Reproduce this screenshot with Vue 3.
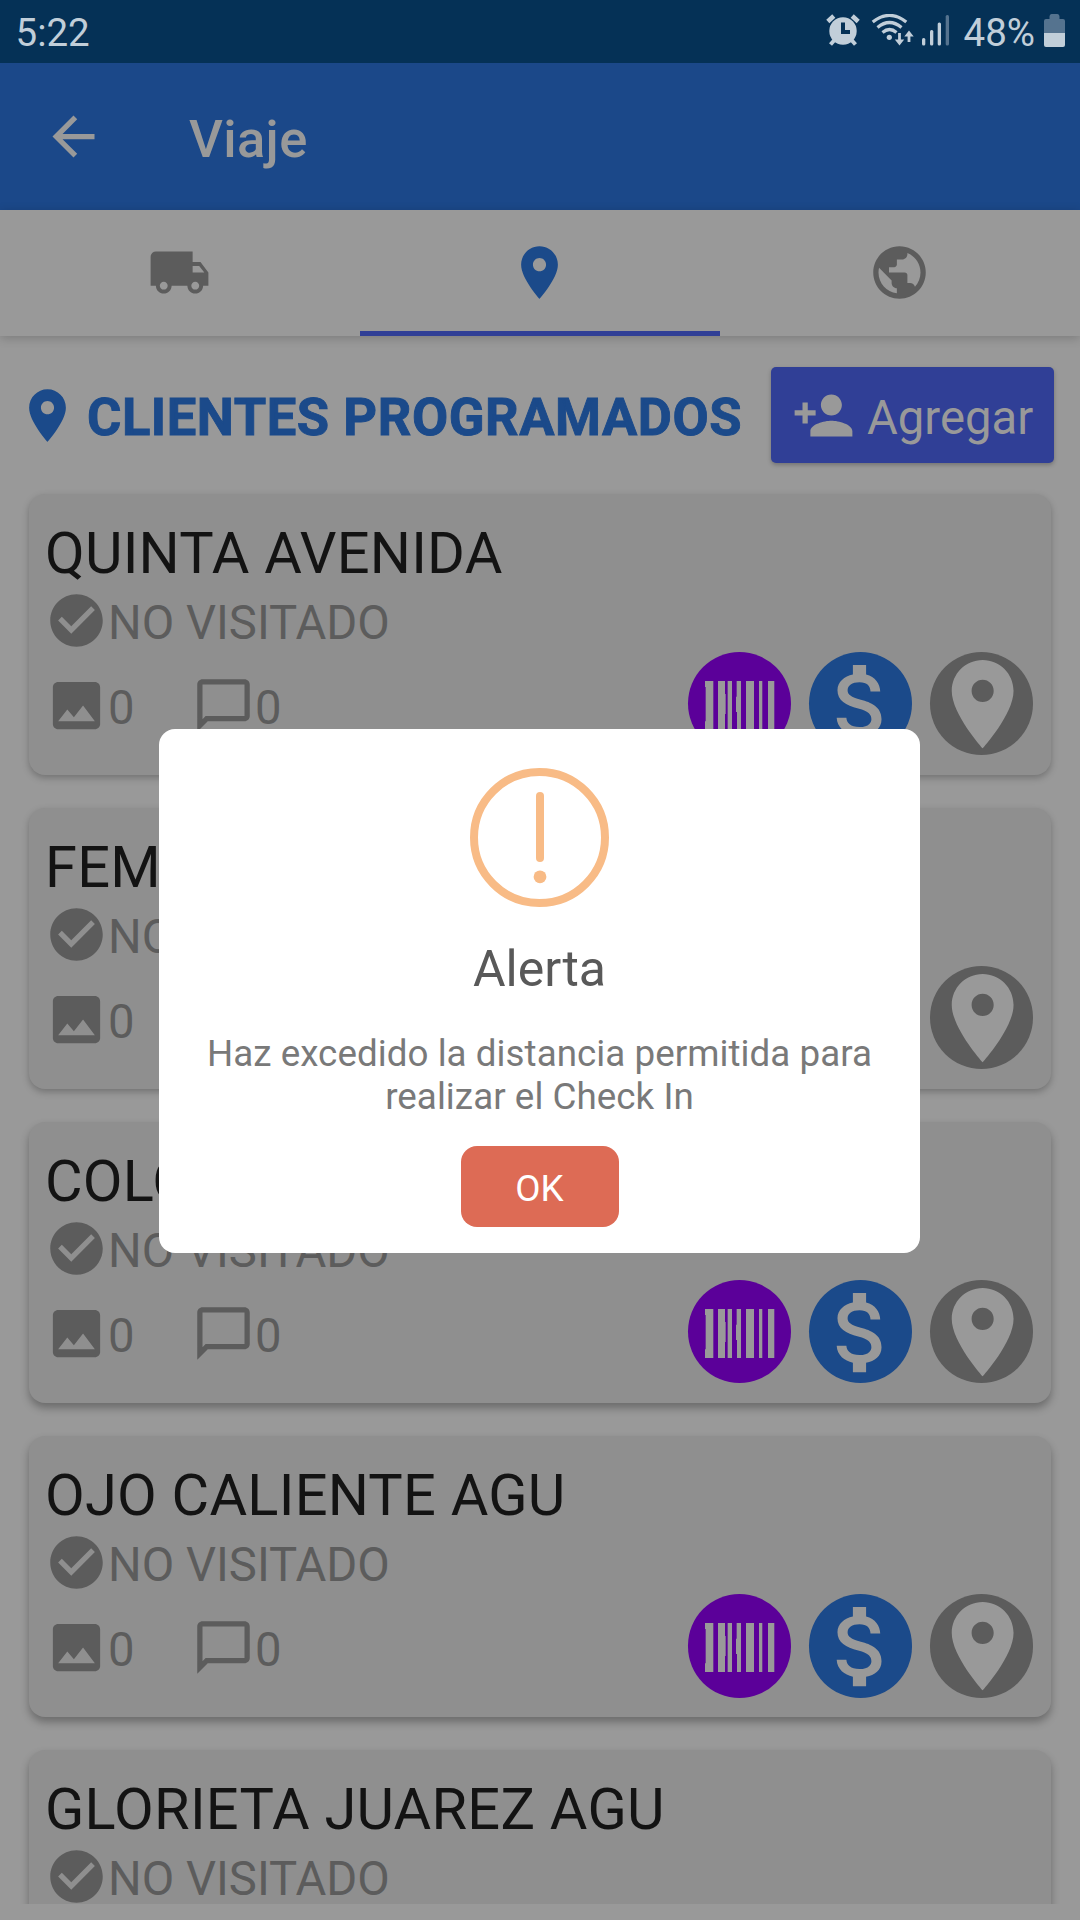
<script setup>
const icons = {
  back: 'M20 11H7.83l5.59-5.59L12 4l-8 8 8 8 1.41-1.41L7.83 13H20v-2z',
  truck: 'M20 8h-3V4H3c-1.1 0-2 .9-2 2v11h2c0 1.66 1.34 3 3 3s3-1.34 3-3h6c0 1.66 1.34 3 3 3s3-1.34 3-3h2v-5l-3-4zM6 18.5c-.83 0-1.5-.67-1.5-1.5s.67-1.5 1.5-1.5 1.5.67 1.5 1.5-.67 1.5-1.5 1.5zm13.5-9l1.96 2.5H17V9.5h2.5zm-1.5 9c-.83 0-1.5-.67-1.5-1.5s.67-1.5 1.5-1.5 1.5.67 1.5 1.5-.67 1.5-1.5 1.5z',
  pin: 'M12 2C8.13 2 5 5.13 5 9c0 5.25 7 13 7 13s7-7.75 7-13c0-3.87-3.13-7-7-7zm0 9.5c-1.38 0-2.5-1.12-2.5-2.5s1.12-2.5 2.5-2.5 2.5 1.12 2.5 2.5-1.12 2.5-2.5 2.5z',
  globe: 'M12 2C6.48 2 2 6.48 2 12s4.48 10 10 10 10-4.48 10-10S17.52 2 12 2zm-1 17.93c-3.95-.49-7-3.85-7-7.93 0-.62.08-1.21.21-1.79L9 15v1c0 1.1.9 2 2 2v1.93zm6.9-2.54c-.26-.81-1-1.39-1.9-1.39h-1v-3c0-.55-.45-1-1-1H8v-2h2c.55 0 1-.45 1-1V7h2c1.1 0 2-.9 2-2v-.41c2.93 1.19 5 4.06 5 7.41 0 2.08-.8 3.97-2.1 5.39z',
  personAdd: 'M15 12c2.21 0 4-1.79 4-4s-1.79-4-4-4-4 1.79-4 4 1.79 4 4 4zm-9-2V7H4v3H1v2h3v3h2v-3h3v-2H6zm9 4c-2.67 0-8 1.34-8 4v2h16v-2c0-2.66-5.33-4-8-4z',
  check: 'M12 2C6.48 2 2 6.48 2 12s4.48 10 10 10 10-4.48 10-10S17.52 2 12 2zm-2 15l-5-5 1.41-1.41L10 14.17l7.59-7.59L19 8l-9 9z',
  image: 'M21 19V5c0-1.1-.9-2-2-2H5c-1.1 0-2 .9-2 2v14c0 1.1.9 2 2 2h14c1.1 0 2-.9 2-2zM5 18l3.5-4.5 2.5 3.01L14.500 12l4.500 6H5z',
  chat: 'M20 2H4c-1.1 0-2 .9-2 2v18l4-4h14c1.1 0 2-.9 2-2V4c0-1.1-.9-2-2-2zm0 14H5.200L4 17.200V4h16v12z',
  money: 'M11.8 10.9c-2.27-.59-3-1.2-3-2.15 0-1.09 1.01-1.85 2.7-1.85 1.78 0 2.44.85 2.5 2.1h2.21c-.07-1.72-1.12-3.3-3.21-3.81V3h-3v2.16c-1.94.42-3.5 1.68-3.5 3.61 0 2.31 1.91 3.46 4.7 4.13 2.5.6 3 1.48 3 2.41 0 .69-.49 1.79-2.7 1.79-2.06 0-2.87-.92-2.98-2.1h-2.2c.12 2.19 1.76 3.42 3.68 3.83V21h3v-2.15c1.95-.37 3.5-1.5 3.5-3.55 0-2.84-2.43-3.81-4.7-4.4z'
}
const clients = ['QUINTA AVENIDA', 'FEMSA AGU', 'COLOSIO AGU', 'OJO CALIENTE AGU', 'GLORIETA JUAREZ AGU']
</script>

<template>
  <div class="screen">
    <header class="status">
      <span class="clock">5:22</span>
      <div class="status-right">
        <svg class="indicators" width="124" height="33" viewBox="826 14 124 33">
          <g fill="#c1ced9">
            <circle cx="843" cy="31" r="13.7" />
            <g stroke="#c1ced9" stroke-width="4.6">
              <path d="M827.8 21.5L833.8 16M858.2 21.5L852.2 16" />
              <path d="M834.5 40L830.5 44.5M851.5 40L855.5 44.5" stroke-width="4" />
            </g>
          </g>
          <path d="M843 22.5V32H850" fill="none" stroke="#053156" stroke-width="4" />
          <g fill="none" stroke="#c1ced9" stroke-width="3.2">
            <path d="M872.7 22Q889.5 8.8 906.3 22" />
            <path d="M877.5 27.5Q889.5 17.5 901.5 27.5" />
            <path d="M882.5 32.5Q889.5 26.5 896.5 32.5" />
            <path d="M899.5 33V42M909 42V34" stroke-width="2.8" />
          </g>
          <g fill="#c1ced9">
            <circle cx="889.3" cy="37.3" r="2.6" />
            <path d="M894.8 39.5H904.2L899.5 45.5ZM904.3 36.5H913.7L909 30.5Z" />
            <rect x="922" y="38" width="3.3" height="7.5" rx="1.5" />
            <rect x="930" y="30" width="3.3" height="15.5" rx="1.5" />
            <rect x="937.7" y="22.5" width="3.3" height="23" rx="1.5" />
          </g>
          <rect x="945.7" y="15" width="3.3" height="30.5" rx="1.5" fill="#55738f" />
        </svg>
        <span class="pct">48%</span>
        <svg class="battery" width="21" height="33" viewBox="0 0 21 33">
          <path d="M5.500 2.500Q5.500 0 7.500 0H13.500Q15.500 0 15.500 2.500V5H19Q21 5 21 7V19H0V7Q0 5 2 5H5.500Z" fill="#55738f" />
          <path d="M0 19H21V31Q21 33 19 33H2Q0 33 0 31Z" fill="#c1ced9" />
        </svg>
      </div>
    </header>

    <div class="appbar">
      <svg class="icon" viewBox="0 0 24 24"><path :d="icons.back" /></svg>
      <h1>Viaje</h1>
    </div>

    <nav class="tabs">
      <div class="tab"><svg class="icon" viewBox="0 0 24 24"><path :d="icons.truck" /></svg></div>
      <div class="tab active"><svg class="icon" viewBox="0 0 24 24"><path :d="icons.pin" /></svg></div>
      <div class="tab"><svg class="icon" viewBox="0 0 24 24"><path :d="icons.globe" /></svg></div>
    </nav>

    <main class="content">
      <div class="heading">
        <svg class="icon" viewBox="0 0 24 24"><path :d="icons.pin" /></svg>
        <h2>CLIENTES PROGRAMADOS</h2>
        <button class="add">
          <svg class="icon" viewBox="0 0 24 24"><path :d="icons.personAdd" /></svg>
          <span>Agregar</span>
        </button>
      </div>

      <section class="list">
        <article v-for="name in clients" :key="name" class="card">
          <h3>{{ name }}</h3>
          <div class="state">
            <svg class="icon" viewBox="0 0 24 24"><path :d="icons.check" /></svg>
            <span>NO VISITADO</span>
          </div>
          <div class="bottom">
            <div class="count photos">
              <svg class="icon" viewBox="0 0 24 24"><path :d="icons.image" /></svg>
              <span>0</span>
            </div>
            <div class="count">
              <svg class="icon" viewBox="0 0 24 24"><path :d="icons.chat" /></svg>
              <span>0</span>
            </div>
            <div class="actions">
              <svg class="round barcode" viewBox="0 0 310 310">
                <path d="M51 87H76V234H51V208H53V105H51ZM90 87H111V126H113V186H111V234H90ZM119 87H132V234H119ZM146 87H159V234H147V180H144V134H146ZM174 87H198V234H174ZM213 87H223V234H213ZM240 87H259V234H240Z" />
              </svg>
              <svg class="round money" viewBox="0 0 310 310"><path transform="translate(-.5 -.8) scale(13.22)" :d="icons.money" /></svg>
              <svg class="round place" viewBox="0 0 310 310"><path transform="translate(-1 -2.5) scale(13.25)" :d="icons.pin" /></svg>
            </div>
          </div>
        </article>
      </section>
    </main>

    <div class="overlay">
      <div class="dialog" role="alertdialog">
        <svg class="warn" width="139" height="139" viewBox="0 0 139 139">
          <circle cx="69.5" cy="69.5" r="65.5" fill="none" stroke="#f8bb86" stroke-width="8" />
          <rect x="66" y="24" width="8" height="70" rx="4" fill="#f8bb86" />
          <circle cx="70" cy="108.8" r="6.4" fill="#f8bb86" />
        </svg>
        <h4>Alerta</h4>
        <p>Haz excedido la distancia permitida para<br />realizar el Check In</p>
        <button class="ok">OK</button>
      </div>
    </div>
  </div>
</template>

<style>
body {
  margin: 0;
  background: #999;
}
</style>

<style scoped>
* {
  box-sizing: border-box;
}
h1, h2, h3, h4, p {
  margin: 0;
}
button {
  border: 0;
  padding: 0;
  font-family: inherit;
}
.screen {
  position: relative;
  width: 1080px;
  height: 1920px;
  overflow: hidden;
  display: flex;
  flex-direction: column;
  background: #999;
  font-family: Roboto, "Liberation Sans", sans-serif;
}
.icon {
  width: 63px;
  height: 63px;
  flex: none;
  display: block;
  fill: currentColor;
}
.status {
  height: 63px;
  flex: none;
  display: flex;
  justify-content: space-between;
  background: #053156;
  color: #c1ced9;
  font-size: 38.5px;
  line-height: 65px;
  padding: 0 15px 0 15.5px;
}
.status-right {
  display: flex;
  align-items: flex-start;
}
.indicators {
  margin: 14px 14px 0 0;
}
.battery {
  margin: 14px 0 0 9px;
}
.appbar {
  height: 147px;
  flex: none;
  display: flex;
  align-items: center;
  padding-left: 42px;
  background: #1b4889;
  color: #999;
}
.appbar h1 {
  margin-left: 84px;
  font-size: 52.5px;
  line-height: 62px;
  font-weight: 500;
  letter-spacing: 0.35px;
  padding-top: 4px;
}
.tabs {
  height: 126px;
  flex: none;
  display: flex;
  position: relative;
  z-index: 1;
  background: #999;
  color: #5c5c5c;
  box-shadow: 0 2px 10px rgba(0, 0, 0, 0.2);
}
.tab {
  flex: 1;
  display: flex;
  justify-content: center;
  align-items: flex-start;
  padding: 30.5px 2px 0 0;
}
.tab.active {
  color: #1b4a8a;
  border-bottom: 5px solid #303f96;
}
.content {
  height: 1568px;
  flex: none;
  overflow: hidden;
  padding: 31px 26px 0 16px;
}
.heading {
  height: 96px;
  display: flex;
  align-items: center;
  color: #1b4a8a;
}
.heading h2 {
  margin-left: 8px;
  font-size: 52.5px;
  line-height: 62px;
  font-weight: 700;
  letter-spacing: 0.55px;
  -webkit-text-stroke: 0.9px #1b4a8a;
  white-space: nowrap;
  padding-top: 4px;
}
.add {
  margin-left: auto;
  width: 283px;
  height: 96px;
  display: flex;
  align-items: center;
  padding-left: 21px;
  border-radius: 5px;
  background: #303f96;
  color: #999;
  box-shadow: 0 2px 4px rgba(0, 0, 0, 0.25);
  font-size: 47.25px;
}
.add span {
  margin-left: 12px;
  padding-top: 5px;
}
.list {
  margin: 31px 3px 0 13px;
  display: flex;
  flex-direction: column;
  gap: 33.3px;
}
.card {
  height: 280.8px;
  flex: none;
  padding: 27px 18px 0 16px;
  border-radius: 16px;
  background: #8f8f8f;
  box-shadow: 0 3px 7px rgba(0, 0, 0, 0.25);
  color: #5c5c5c;
  font-size: 47.25px;
}
.card:nth-child(n + 3) {
  box-shadow: 0 5px 9px rgba(0, 0, 0, 0.3);
}
.card h3 {
  font-size: 57.75px;
  line-height: 64px;
  font-weight: 400;
  letter-spacing: 0.24px;
  color: #131313;
}
.state {
  height: 63px;
  margin-top: 4px;
  display: flex;
  align-items: center;
}
.state span, .count span {
  padding-top: 5px;
}
.bottom {
  display: flex;
  align-items: flex-start;
}
.count {
  height: 63px;
  margin-top: 22px;
  display: flex;
  align-items: center;
}
.photos {
  width: 147px;
}
.actions {
  margin-left: auto;
  display: flex;
  gap: 17.7px;
}
.round {
  width: 103.3px;
  height: 103.3px;
  border-radius: 50%;
  fill: #999;
}
.barcode {
  background: #5b0099;
}
.money {
  background: #1b4a8a;
}
.place {
  background: #5c5c5c;
}
.overlay {
  position: absolute;
  inset: 63px 0 0;
  z-index: 2;
  display: flex;
  justify-content: center;
  align-items: flex-start;
  padding: 666px 1px 0 0;
}
.dialog {
  width: 761px;
  height: 524px;
  display: flex;
  flex-direction: column;
  align-items: center;
  padding-top: 39px;
  border-radius: 16px;
  background: #fff;
}
.warn {
  flex: none;
}
.dialog h4 {
  margin-top: 32px;
  font-size: 50px;
  line-height: 60px;
  font-weight: 400;
  color: #595959;
}
.dialog p {
  margin-top: 33px;
  font-size: 36.75px;
  line-height: 43px;
  letter-spacing: 0.05px;
  text-align: center;
  white-space: nowrap;
  color: #797979;
}
.ok {
  width: 158px;
  height: 81px;
  margin-top: 28px;
  padding-top: 3px;
  border-radius: 16px;
  background: #dd6b55;
  color: #fff;
  font-size: 36.75px;
}
</style>
